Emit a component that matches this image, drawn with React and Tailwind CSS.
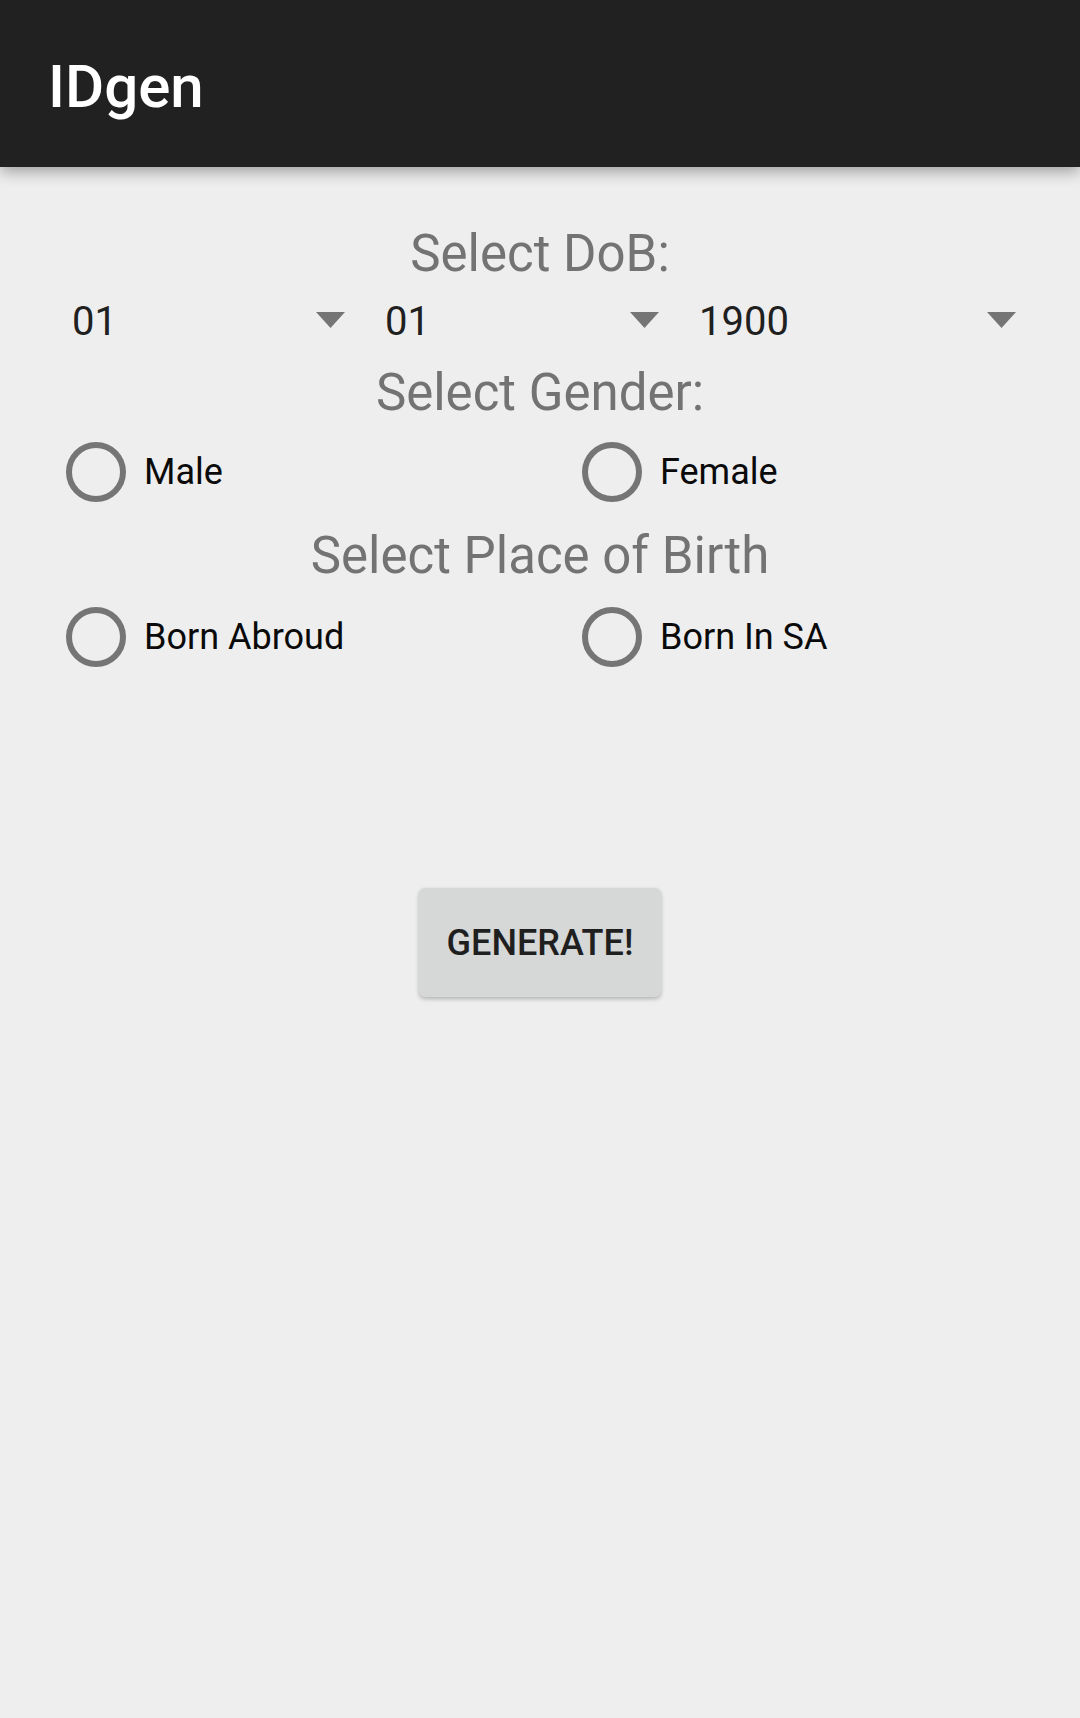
import React from "react";

const font = { fontFamily: "Roboto, 'Noto Sans', sans-serif" };

const Caret = () => (
  <svg width="29" height="16" viewBox="0 0 29 16" className="shrink-0">
    <polygon points="0,0 29,0 14.5,16" fill="#757575" />
  </svg>
);

const Spinner = ({ value, className }) => (
  <div className={`flex items-center justify-between pl-[24px] pr-[16px] ${className}`}>
    <span className="text-[40px] leading-none text-[#202020] pt-[3px]">{value}</span>
    <Caret />
  </div>
);

const Radio = ({ label }) => (
  <div className="flex items-center pl-[18px]">
    <span className="w-[60px] h-[60px] rounded-full border-[6px] border-[#757575] shrink-0" />
    <span className="ml-[18px] text-[36px] leading-none text-[#0a0a0a]">{label}</span>
  </div>
);

const SectionTitle = ({ children, className }) => (
  <div className={`flex items-center justify-center text-[51px] text-[#737373] leading-none ${className}`}>
    {children}
  </div>
);

const App = () => {
  return (
    <div className="min-h-screen bg-[#eeeeee]" style={font}>
      <header className="h-[167px] bg-[#212121] flex items-center pl-[48px] pt-[6px] shadow-[0_5px_14px_rgba(0,0,0,0.32)] relative">
        <h1 className="text-white text-[60px] font-medium leading-none">IDgen</h1>
      </header>

      <main className="flex flex-col">
        <SectionTitle className="h-[60px] mt-[56px]">Select DoB:</SectionTitle>

        <div className="h-[74px] flex items-center pl-[48px] pr-[48px]">
          <Spinner value="01" className="w-[313px]" />
          <Spinner value="01" className="w-[314px]" />
          <Spinner value="1900" className="flex-1" />
        </div>

        <SectionTitle className="h-[71px]">Select Gender:</SectionTitle>

        <div className="h-[88px] flex items-center pl-[48px]">
          <div className="w-[516px]">
            <Radio label="Male" />
          </div>
          <Radio label="Female" />
        </div>

        <SectionTitle className="h-[78px]">Select Place of Birth</SectionTitle>

        <div className="h-[85px] flex items-center pl-[48px]">
          <div className="w-[516px]">
            <Radio label="Born Abroud" />
          </div>
          <Radio label="Born In SA" />
        </div>

        <div className="flex justify-center mt-[209px]">
          <button className="w-[242px] h-[109px] rounded-[6px] bg-[#d6d7d7] shadow-[0_2px_4px_rgba(0,0,0,0.25)] text-[36px] font-medium text-[#1f1f1f] leading-none">
            GENERATE!
          </button>
        </div>
      </main>
    </div>
  );
};

export default App;
